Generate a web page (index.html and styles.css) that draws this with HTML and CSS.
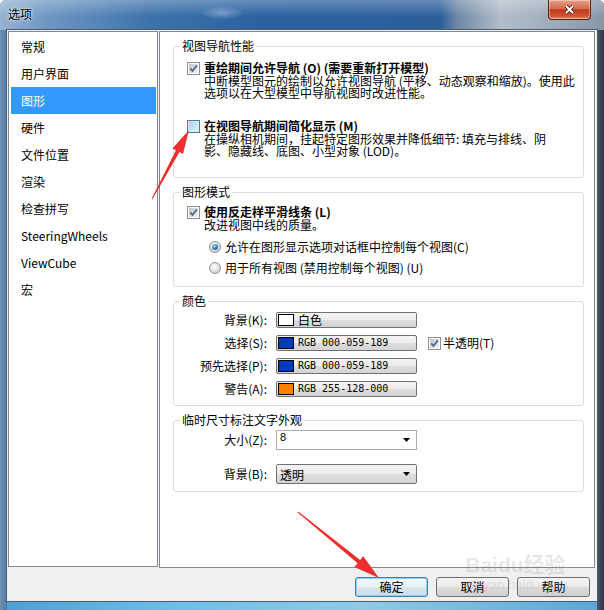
FILE: index.html
```html
<!DOCTYPE html>
<html lang="zh-CN">
<head>
    <meta charset="UTF-8">
    <meta name="viewport" content="width=device-width, initial-scale=1.0">
    <title>选项</title>
    <link rel="stylesheet" href="styles.css">
</head>
<body>
    <div class="window">
        <!-- Barra del titolo -->
        <div class="titlebar">
            <span class="title">选项</span>
            <span class="close">
                <svg width="13" height="11" viewBox="0 0 13 11">
                    <path d="M3 2 L10 9 M10 2 L3 9" stroke="#4a1a10" stroke-width="3.6" fill="none"/>
                    <path d="M3 2 L10 9 M10 2 L3 9" stroke="#ffffff" stroke-width="1.9" fill="none"/>
                </svg>
            </span>
        </div>

        <div class="client">
            <div class="panes">
                <!-- Elenco delle pagine -->
                <ul class="nav">
                    <li>常规</li>
                    <li>用户界面</li>
                    <li class="selected">图形</li>
                    <li>硬件</li>
                    <li>文件位置</li>
                    <li>渲染</li>
                    <li>检查拼写</li>
                    <li>SteeringWheels</li>
                    <li>ViewCube</li>
                    <li>宏</li>
                </ul>

                <!-- Pagina "图形" -->
                <div class="page">
                    <fieldset class="group">
                        <legend>视图导航性能</legend>
                        <div class="group-body body-nav">
                            <div class="option">
                                <div class="option-head">
                                    <span class="check"><svg width="9" height="9" viewBox="0 0 9 9"><path d="M1.3 4.4 L3.5 7 L7.8 1.4" fill="none" stroke="#4b5e8e" stroke-width="1.7"/></svg></span>
                                    <b>重绘期间允许导航 (O) (需要重新打开模型)</b>
                                </div>
                                <p class="desc">中断模型图元的绘制以允许视图导航 (平移、动态观察和缩放)。使用此<br>选项以在大型模型中导航视图时改进性能。</p>
                            </div>
                            <div class="option">
                                <div class="option-head">
                                    <span class="check hot"></span>
                                    <b>在视图导航期间简化显示 (M)</b>
                                </div>
                                <p class="desc">在操纵相机期间，挂起特定图形效果并降低细节: 填充与排线、阴<br>影、隐藏线、底图、小型对象 (LOD)。</p>
                            </div>
                        </div>
                    </fieldset>

                    <fieldset class="group">
                        <legend>图形模式</legend>
                        <div class="group-body body-mode">
                            <div class="option-head">
                                <span class="check"><svg width="9" height="9" viewBox="0 0 9 9"><path d="M1.3 4.4 L3.5 7 L7.8 1.4" fill="none" stroke="#4b5e8e" stroke-width="1.7"/></svg></span>
                                <b>使用反走样平滑线条 (L)</b>
                            </div>
                            <p class="desc">改进视图中线的质量。</p>
                            <div class="radios">
                                <div class="radio-row"><span class="radio on"></span>允许在图形显示选项对话框中控制每个视图(C)</div>
                                <div class="radio-row"><span class="radio"></span>用于所有视图 (禁用控制每个视图) (U)</div>
                            </div>
                        </div>
                    </fieldset>

                    <fieldset class="group">
                        <legend>颜色</legend>
                        <div class="group-body form-grid body-colors">
                            <span class="field-label">背景(K):</span>
                            <span class="swatch-btn"><span class="swatch swatch-white"></span>白色</span>
                            <span></span>

                            <span class="field-label">选择(S):</span>
                            <span class="swatch-btn"><span class="swatch swatch-blue"></span><span class="mono">RGB 000-059-189</span></span>
                            <span class="inline-check">
                                <span class="check"><svg width="9" height="9" viewBox="0 0 9 9"><path d="M1.3 4.4 L3.5 7 L7.8 1.4" fill="none" stroke="#4b5e8e" stroke-width="1.7"/></svg></span>半透明(T)
                            </span>

                            <span class="field-label">预先选择(P):</span>
                            <span class="swatch-btn"><span class="swatch swatch-blue"></span><span class="mono">RGB 000-059-189</span></span>
                            <span></span>

                            <span class="field-label">警告(A):</span>
                            <span class="swatch-btn"><span class="swatch swatch-orange"></span><span class="mono">RGB 255-128-000</span></span>
                            <span></span>
                        </div>
                    </fieldset>

                    <fieldset class="group">
                        <legend>临时尺寸标注文字外观</legend>
                        <div class="group-body form-grid body-text">
                            <span class="field-label">大小(Z):</span>
                            <span class="combo combo-edit"><span class="combo-value">8</span><svg width="7" height="4" viewBox="0 0 7 4"><path d="M0 0 H7 L3.5 4 Z" fill="#000"/></svg></span>
                            <span></span>

                            <span class="field-label">背景(B):</span>
                            <span class="combo combo-list"><span>透明</span><svg width="7" height="4" viewBox="0 0 7 4"><path d="M0 0 H7 L3.5 4 Z" fill="#000"/></svg></span>
                            <span></span>
                        </div>
                    </fieldset>
                </div>
            </div>

            <!-- Bottoni del dialogo -->
            <div class="actions">
                <button class="btn btn-default">确定</button>
                <button class="btn">取消</button>
                <button class="btn">帮助</button>
            </div>
        </div>

        <!-- Frecce rosse disegnate sopra lo screenshot -->
        <svg class="marks" width="604" height="610" viewBox="0 0 604 610">
            <polygon points="151.6,198.8 175.9,150.3 172.4,148.4 189,130 183,154 179.5,152.1 152.4,199.2" fill="#ee2f2f"/>
            <polygon points="298.3,511.6 360.1,560 363.3,556.2 379,578 354.4,567 357.6,563.2 297.7,512.4" fill="#ee2f2f"/>
        </svg>

        <div class="watermark">
            <span class="wm-big">Baidu经验</span>
            <span class="wm-small">jingyan.baidu.com</span>
        </div>
    </div>
</body>
</html>
```

FILE: styles.css
```css
/* Impostazioni generali */
body {
    margin: 0;
    background: #ffffff;
    font-family: "Noto Sans CJK SC", sans-serif;
    font-size: 12px;
    color: #000;
}

.window {
    position: relative;
    width: 604px;
    height: 610px;
    overflow: hidden;
    border-radius: 6px 6px 0 0;
    display: flex;
    flex-direction: column;
    background:
        linear-gradient(90deg, #7290b0 0, #4c7ca8 7px, transparent 7px, transparent 597px, #4a586c 597px, #2a3544 604px),
        linear-gradient(90deg, #4b9fd5, #6dc0ea 30%, #8dcbe6 60%, #58a8d8);
}

/* Barra del titolo in stile Aero */
.titlebar {
    height: 30px;
    flex: none;
    display: flex;
    justify-content: space-between;
    align-items: flex-start;
    background:
        linear-gradient(180deg, rgba(255, 255, 255, 0.28), rgba(255, 255, 255, 0) 55%),
        radial-gradient(22px 7px at 222px 13px, rgba(140, 170, 210, 0.7), rgba(140, 170, 210, 0)),
        linear-gradient(90deg, #95b3d3 0, #6f98c4 45px, #3d72ab 150px, #2b61a0 260px, #2c5f9c 440px, #7089a6 458px, #b2bdc9 500px, #a3b1bf 540px, #8797a8 604px);
}

.title {
    padding: 7px 0 0 8px;
    line-height: 14px;
    text-shadow: 0 0 5px rgba(255, 255, 255, 0.9), 0 0 2px rgba(255, 255, 255, 0.8);
}

.close {
    width: 43px;
    height: 20px;
    margin-right: 13px;
    box-sizing: border-box;
    border: 1px solid #5c2216;
    border-top: none;
    border-radius: 0 0 4px 4px;
    display: flex;
    align-items: center;
    justify-content: center;
    background: linear-gradient(#e7a28e, #d36a4e 45%, #c13b1d 52%, #cf5533 85%, #e2906c);
    box-shadow: inset 0 0 0 1px rgba(255, 255, 255, 0.35);
}

/* Area client */
.client {
    height: 571px;
    margin: 0 7px;
    background: #f0f0f0;
    box-shadow: 0 0 0 1px #4b5b6e;
}

.panes {
    display: flex;
    gap: 1px;
    padding: 1px 0 0 1px;
}

.nav {
    list-style: none;
    margin: 0;
    padding: 1px 1px 0 2px;
    width: 150px;
    height: 536px;
    box-sizing: border-box;
    border: 1px solid #828790;
    background: #fff;
}

.nav li {
    height: 27px;
    line-height: 27px;
    padding-left: 10px;
    white-space: nowrap;
}

.nav .selected {
    background: #3399ff;
    color: #fff;
}

.page {
    width: 436px;
    height: 537px;
    box-sizing: border-box;
    border: 1px solid #828790;
    background: #fff;
    padding: 8px 10px 0 13px;
}

/* Gruppi */
.group {
    margin: 0;
    padding: 0;
    min-width: 0;
    border: 1px solid #d5dfe5;
    border-radius: 3px;
}

.group + .group {
    margin-top: 8px;
}

.group legend {
    margin-left: 6px;
    padding: 0 2px;
    line-height: 12px;
}

.body-nav {
    padding: 9px 0 20px 13px;
}

.body-mode {
    padding: 7px 0 11px 13px;
}

.option + .option {
    margin-top: 20px;
}

.option-head {
    display: flex;
    align-items: center;
    gap: 4px;
    line-height: 14px;
    white-space: nowrap;
}

.desc {
    margin: 0;
    padding-left: 17px;
    line-height: 12px;
    white-space: nowrap;
}

.radios {
    margin-top: 9px;
    padding-left: 22px;
}

.radio-row {
    display: flex;
    align-items: center;
    gap: 4px;
    line-height: 14px;
    white-space: nowrap;
}

.radio-row + .radio-row {
    margin-top: 7px;
}

/* Checkbox e radio Windows 7 */
.check {
    flex: none;
    display: inline-flex;
    width: 13px;
    height: 13px;
    box-sizing: border-box;
    border: 1px solid #8e8f8f;
    padding: 1px;
    background: linear-gradient(135deg, #c0c4c9, #f2f2f2) content-box, #fff;
}

.check svg {
    display: block;
}

.check.hot {
    border-color: #3c7fb1;
    background: linear-gradient(135deg, #a3d3f2, #e3f3fc) content-box, #def0fa;
}

.radio {
    flex: none;
    width: 12px;
    height: 12px;
    box-sizing: border-box;
    border: 1px solid #8e8f8f;
    border-radius: 50%;
    display: inline-flex;
    align-items: center;
    justify-content: center;
    background: radial-gradient(circle at 40% 35%, #ffffff, #d6d6d6 70%, #bdbdbd);
}

.radio.on::after {
    content: "";
    width: 6px;
    height: 6px;
    border-radius: 50%;
    background: radial-gradient(circle at 40% 35%, #a8ddff, #2a80d0 50%, #0c3f7a);
}

/* Griglia etichette / controlli */
.form-grid {
    display: grid;
    grid-template-columns: 93px 141px auto;
    column-gap: 9px;
    align-items: center;
}

.body-colors {
    row-gap: 7px;
    padding: 5px 0 8px 0;
}

.body-text {
    row-gap: 14px;
    padding: 4px 0 7px 0;
}

.field-label {
    text-align: right;
    white-space: nowrap;
    line-height: 16px;
}

.swatch-btn {
    height: 16px;
    box-sizing: border-box;
    border: 1px solid #707070;
    border-radius: 2px;
    padding-left: 1px;
    display: flex;
    align-items: center;
    gap: 4px;
    line-height: 14px;
    background: linear-gradient(#f4f4f4, #ececec 50%, #dedede 51%, #d3d3d3);
}

.swatch {
    width: 16px;
    height: 12px;
    box-sizing: border-box;
    border: 1px solid #000;
}

.swatch-white { background: #fff; }
.swatch-blue { background: #003bbd; }
.swatch-orange { background: #ff8000; }

.mono {
    font-family: "DejaVu Sans Mono", monospace;
    font-size: 10px;
}

.inline-check {
    display: flex;
    align-items: center;
    gap: 2px;
    padding-left: 2px;
    white-space: nowrap;
    line-height: 14px;
}

.combo {
    height: 20px;
    box-sizing: border-box;
    display: flex;
    align-items: center;
    justify-content: space-between;
    padding: 0 6px 0 3px;
}

.combo-edit {
    border: 1px solid #abadb3;
    background: #fff;
}

.combo-value {
    align-self: flex-start;
    font-family: "Liberation Sans", sans-serif;
    font-size: 11px;
    line-height: 13px;
}

.combo-list {
    border: 1px solid #707070;
    border-radius: 2px;
    background: linear-gradient(#f4f4f4, #ececec 50%, #dedede 51%, #d3d3d3);
}

/* Bottoni */
.actions {
    display: flex;
    justify-content: flex-end;
    gap: 8px;
    padding: 9px 7px 0 0;
}

.btn {
    width: 73px;
    height: 20px;
    padding: 0;
    box-sizing: border-box;
    border: 1px solid #707070;
    border-radius: 3px;
    font-family: "Noto Sans CJK SC", sans-serif;
    font-size: 12px;
    line-height: 18px;
    color: #000;
    background: linear-gradient(#f4f4f4, #ebebeb 50%, #dddddd 51%, #cfcfcf);
}

.btn-default {
    border-color: #3c7fb1;
    box-shadow: inset 0 0 0 1px #8fd3f5;
    background: linear-gradient(#f5fafd, #e8f0f5 50%, #dae5ec 51%, #d0dde6);
}

/* Sovrapposizioni */
.marks {
    position: absolute;
    left: 0;
    top: 0;
    pointer-events: none;
}

.watermark {
    position: absolute;
    left: 463px;
    top: 552px;
    display: flex;
    flex-direction: column;
    align-items: center;
    color: rgba(130, 130, 130, 0.2);
    pointer-events: none;
}

.wm-big {
    font-family: "Liberation Sans", "Noto Sans CJK SC", sans-serif;
    font-size: 21px;
    font-weight: bold;
    line-height: 26px;
}

.wm-small {
    font-family: "Liberation Sans", sans-serif;
    font-size: 13px;
    line-height: 14px;
}
```
